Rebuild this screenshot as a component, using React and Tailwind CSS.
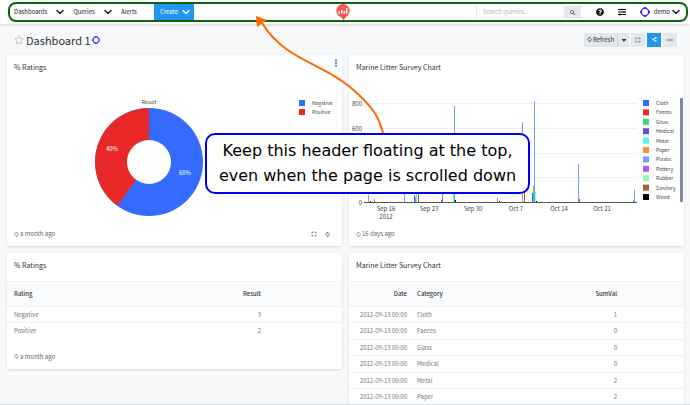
import React from 'react';
import { ChevronDown, Star } from 'lucide-react';
import {
  FaSearch,
  FaQuestionCircle,
  FaSlidersH,
  FaCaretDown,
  FaShareAlt,
  FaEllipsisV,
} from 'react-icons/fa';
import { MdFullscreen, MdMoreHoriz } from 'react-icons/md';

const BASELINE = 119;

const legendItems = [
  { name: 'Cloth', color: '#356aff' },
  { name: 'Faeces', color: '#e92828' },
  { name: 'Glass', color: '#3bd973' },
  { name: 'Medical', color: '#604fe9' },
  { name: 'Metal', color: '#50f5ed' },
  { name: 'Paper', color: '#fb8d3d' },
  { name: 'Plastic', color: '#799cff' },
  { name: 'Pottery', color: '#b554ff' },
  { name: 'Rubber', color: '#8cffb4' },
  { name: 'Sanitary', color: '#a55f2a' },
  { name: 'Wood', color: '#000000' },
];

const bars = [
  { x: 19, h: 7, color: '#799cff' },
  { x: 21, h: 1, color: '#000000' },
  { x: 25, h: 3, color: '#799cff' },
  { x: 55, h: 14, color: '#799cff' },
  { x: 65, h: 7, color: '#356aff' },
  { x: 66, h: 5, color: '#799cff' },
  { x: 67, h: 12, color: '#50f5ed' },
  { x: 69, h: 14, color: '#a55f2a' },
  { x: 92, h: 2, color: '#356aff' },
  { x: 93, h: 12, color: '#b554ff' },
  { x: 104, h: 12, color: '#50f5ed' },
  { x: 105, h: 96, color: '#799cff' },
  { x: 106, h: 2, color: '#000000' },
  { x: 148, h: 4, color: '#799cff' },
  { x: 150, h: 1, color: '#000000' },
  { x: 173, h: 80, color: '#799cff' },
  { x: 175, h: 12, color: '#a55f2a' },
  { x: 183, h: 9, color: '#356aff' },
  { x: 184, h: 16, color: '#3bd973' },
  { x: 185, h: 101, color: '#799cff' },
  { x: 186, h: 10, color: '#8cffb4' },
  { x: 187, h: 1, color: '#000000' },
  { x: 229, h: 38, color: '#799cff' },
  { x: 230, h: 3, color: '#a55f2a' },
  { x: 284, h: 2, color: '#3bd973' },
  { x: 285, h: 12, color: '#799cff' },
];

const gridLines = [20, 45, 70, 94, 119];

const yTicks = [
  { label: '0', y: 119 },
  { label: '600', y: 45 },
  { label: '800', y: 20 },
];

const xTicks = [
  { label: 'Sep 16', x: 37 },
  { label: 'Sep 23', x: 80 },
  { label: 'Sep 30', x: 124 },
  { label: 'Oct 7', x: 167 },
  { label: 'Oct 14', x: 210 },
  { label: 'Oct 21', x: 253 },
];

const ratings = [
  { rating: 'Negative', result: 3 },
  { rating: 'Positive', result: 2 },
];

const survey = [
  { category: 'Cloth', sum: 1 },
  { category: 'Faeces', sum: 0 },
  { category: 'Glass', sum: 0 },
  { category: 'Medical', sum: 0 },
  { category: 'Metal', sum: 2 },
  { category: 'Paper', sum: 2 },
];

// Small two-arrow refresh icon
const RefreshIcon = ({ className }) => (
  <svg viewBox="0 0 12 12" className={className} fill="none" stroke="currentColor" strokeWidth="1.6">
    <path d="M2.4 8.4A4.3 4.3 0 0 1 6.5 1.8M9.6 3.6A4.3 4.3 0 0 1 5.5 10.2" />
    <path d="M6 0l2.6 2L6 4zM6 12L3.4 10 6 8z" fill="currentColor" stroke="none" />
  </svg>
);

// Ring avatar with a flat bump on each side
const Avatar = ({ className }) => (
  <svg viewBox="0 0 20 20" className={className} fill="none">
    <path
      d="M7 2.8L13 2.8L17.2 7L17.2 13L13 17.2L7 17.2L2.8 13L2.8 7Z"
      stroke="#4a2cf0"
      strokeWidth="2.6"
    />
    <path d="M8 1.4h4M8 18.6h4M1.4 8v4M18.6 8v4" stroke="#2a00e0" strokeWidth="2" />
  </svg>
);

const Logo = () => (
  <svg viewBox="0 0 28 32" className="h-4 w-3.5" aria-label="Redash">
    <path d="M9 24L15 32L21 24Z" fill="#d9403a" />
    <circle cx="14" cy="13.5" r="13.5" fill="#f25c55" />
    <path d="M5 15h3v4H5zM10 12h3v7h-3zM15 14h3v5h-3zM20 8h3v11h-3z" fill="#fff" />
  </svg>
);

const Header = () => (
  <header className="relative grid h-6 shrink-0 grid-cols-[1fr_auto_1fr] items-center bg-white pr-1 text-[6px] leading-3 text-[#222] shadow-sm">
    <nav className="flex items-center gap-[7px] pl-3.5">
      <a href="#dashboards">Dashboards</a>
      <ChevronDown className="h-3 w-3" strokeWidth={3} />
      <a href="#queries">Queries</a>
      <ChevronDown className="h-3 w-3" strokeWidth={3} />
      <a href="#alerts">Alerts</a>
      <button className="ml-2.5 flex h-4 items-center gap-0.5 bg-[#2196f3] pr-0.5 pl-1.5 text-white">
        Create
        <ChevronDown className="h-3 w-3" strokeWidth={3} />
      </button>
    </nav>
    <Logo />
    <div className="flex items-center justify-end pr-1">
      <input
        type="text"
        aria-label="Search queries"
        placeholder="Search queries..."
        className="h-3 w-[88px] border-l border-[#e4e8eb] px-1.5 placeholder:text-[#b5b5b5]"
      />
      <button aria-label="Search" className="mr-[15px] flex h-3 w-[17px] items-center justify-center bg-[#e4e9ed]">
        <FaSearch className="h-[5px] w-[5px] text-[#555]" />
      </button>
      <FaQuestionCircle className="mr-3.5 h-2 w-2 text-black" />
      <FaSlidersH className="mr-3.5 h-2 w-2 text-black" />
      <Avatar className="mr-1 h-2.5 w-2.5" />
      <span>demo</span>
      <ChevronDown className="h-3 w-3" strokeWidth={3} />
    </div>
    <div className="pointer-events-none absolute top-0.5 right-0.5 bottom-0.5 left-2 rounded-lg border-2 border-[#0f650f]" />
  </header>
);

const Card = ({ title, menu, children, footer }) => (
  <section className="relative flex flex-col rounded-xs bg-white shadow-sm">
    <h2 className="h-7 px-[7px] pt-1.5 text-[7px] leading-3 text-[#333]">{title}</h2>
    {menu && (
      <button aria-label="Widget menu" className="absolute top-1 right-0.5 text-[#2196f3]">
        <FaEllipsisV className="h-2 w-2" />
      </button>
    )}
    {children}
    {footer}
  </section>
);

const CardFooter = ({ text, actions }) => (
  <div className="flex h-6 items-center px-[7px] text-[6px] leading-3 text-[#666]">
    <RefreshIcon className="mr-px h-[5px] w-[5px]" />
    <span>{text}</span>
    {actions && (
      <div className="ml-auto flex items-center gap-[7px] pr-[5px] text-[#333]">
        <MdFullscreen className="h-2 w-2" />
        <RefreshIcon className="h-[5px] w-[5px]" />
      </div>
    )}
  </div>
);

const PieChart = () => (
  <svg viewBox="0 0 335 139" className="h-[139px] w-full text-[5px]" fill="#444">
    <text x="142" y="21" textAnchor="middle">Result</text>
    <circle cx="142" cy="79" r="54" fill="#356aff" />
    <path d="M142 79L110.3 122.7A54 54 0 0 1 142 25Z" fill="#e92828" />
    <circle cx="142" cy="79" r="22" fill="#fff" />
    <text x="105" y="68" textAnchor="middle" fill="#fff" className="text-[6px]">40%</text>
    <text x="178" y="92" textAnchor="middle" fill="#fff" className="text-[6px]">60%</text>
    <rect x="292" y="17" width="6" height="6" fill="#356aff" />
    <rect x="292" y="26" width="6" height="6" fill="#e92828" />
    <text x="305" y="22">Negative</text>
    <text x="305" y="31">Positive</text>
  </svg>
);

const BarChart = () => (
  <svg viewBox="0 0 335 139" className="h-[139px] w-full text-[6px]" fill="#444">
    {gridLines.map((y) => (
      <rect key={y} x="15" y={y} width="273" height="1" fill="#f0f0f0" />
    ))}
    {yTicks.map((tick) => (
      <text key={tick.label} x="13" y={tick.y + 3} textAnchor="end">{tick.label}</text>
    ))}
    {bars.map((bar) => (
      <rect key={bar.x} x={bar.x} y={BASELINE - bar.h} width="1" height={bar.h} fill={bar.color} />
    ))}
    <rect x="15" y={BASELINE} width="273" height="1" fill="#555" />
    {xTicks.map((tick) => (
      <text key={tick.label} x={tick.x} y="128" textAnchor="middle">{tick.label}</text>
    ))}
    <text x="37" y="136" textAnchor="middle">2012</text>
    {legendItems.map((item, i) => (
      <g key={item.name} className="text-[5px]">
        <rect x="294" y={17 + i * 9.4} width="6" height="6" fill={item.color} />
        <text x="307" y={22 + i * 9.4}>{item.name}</text>
      </g>
    ))}
    <rect x="331" y="15" width="3" height="104" rx="1" fill="#7b88a3" />
  </svg>
);

const headRow = 'h-[25px] border-y border-[#eff1f3] bg-[#fafbfc] text-[#333]';
const bodyRow = 'odd:h-4 even:h-[17px] border-b border-[#eff1f3] last:border-b-0';

const RatingsTable = () => (
  <table className="mb-[5px] w-full table-fixed text-[6px] leading-3 text-[#777]">
    <thead>
      <tr className={headRow}>
        <th className="w-[70px] pl-[7px] text-left font-medium">Rating</th>
        <th className="pr-[81px] text-right font-medium">Result</th>
      </tr>
    </thead>
    <tbody>
      {ratings.map((row) => (
        <tr key={row.rating} className={bodyRow}>
          <td className="pl-[7px]">{row.rating}</td>
          <td className="pr-[81px] text-right">{row.result}</td>
        </tr>
      ))}
    </tbody>
  </table>
);

const SurveyTable = () => (
  <table className="w-full table-fixed text-[6px] leading-3 text-[#777]">
    <thead>
      <tr className={headRow}>
        <th className="w-[58px] text-right font-medium">Date</th>
        <th className="pl-2.5 text-left font-medium">Category</th>
        <th className="pr-[67px] text-right font-medium">SumVal</th>
      </tr>
    </thead>
    <tbody>
      {survey.map((row) => (
        <tr key={row.category} className={bodyRow}>
          <td className="text-right whitespace-nowrap">2012-09-13 00:00</td>
          <td className="pl-2.5">{row.category}</td>
          <td className="pr-[67px] text-right">{row.sum}</td>
        </tr>
      ))}
    </tbody>
  </table>
);

const Toolbar = () => (
  <div className="ml-auto flex items-center gap-0.5 pr-[7px] text-[6px] leading-3 text-[#333]">
    <div className="flex">
      <button className="flex h-3.5 w-[34px] items-center justify-center gap-px border-r border-[#cfd6db] bg-[#e1e7eb]">
        <RefreshIcon className="h-[5px] w-[5px]" />
        Refresh
      </button>
      <button aria-label="Refresh schedule" className="flex h-3.5 w-[11px] items-center justify-center bg-[#e1e7eb]">
        <FaCaretDown className="h-2 w-2" />
      </button>
    </div>
    <button aria-label="Fullscreen" className="flex h-3.5 w-3.5 items-center justify-center bg-[#e1e7eb]">
      <MdFullscreen className="h-2 w-2" />
    </button>
    <button aria-label="Share" className="flex h-3.5 w-3.5 items-center justify-center bg-[#2196f3] text-white">
      <FaShareAlt className="h-[5px] w-[5px]" />
    </button>
    <button aria-label="More" className="flex h-3.5 w-3.5 items-center justify-center bg-[#e1e7eb]">
      <MdMoreHoriz className="h-2 w-2" />
    </button>
  </div>
);

// Callout bubble with an arrow up to the header
const Annotation = () => (
  <div className="pointer-events-none absolute inset-0">
    <svg viewBox="0 0 690 405" className="absolute top-0 left-0 h-[405px] w-[690px]" fill="none">
      <path d="M262 23C285 60 320 62 350 87S380 124 384 136" stroke="#ff6600" strokeWidth="2" />
      <path d="M256 16L267 20L257 27Z" fill="#ff6600" />
    </svg>
    <p className="absolute top-[133px] left-[205px] w-[325px] rounded-[10px] border-2 border-[#0000ee] bg-white pt-[3px] pb-1 text-center font-['DejaVu_Sans',sans-serif] text-[16px] leading-[25px] text-black">
      Keep this header floating at the top,
      <br />
      even when the page is scrolled down
    </p>
  </div>
);

const App = () => {
  return (
    <div className="relative flex h-screen flex-col overflow-hidden border-b border-[#d9dcdf] bg-[#f6f8f9] font-['Noto_Sans_CJK_SC',sans-serif]">
      <Header />
      <div className="flex h-[31px] shrink-0 items-center pr-1.5 pl-3.5">
        <Star className="mr-0.5 h-2.5 w-2.5 text-[#bbb]" strokeWidth={2} />
        <h1 className="text-[11px] leading-4 text-[#333]">Dashboard 1</h1>
        <Avatar className="ml-px h-2 w-2" />
        <Toolbar />
      </div>
      <main className="grid grid-cols-2 items-start gap-[7px] pr-1.5 pl-[7px]">
        <Card title="% Ratings" menu footer={<CardFooter text="a month ago" actions />}>
          <PieChart />
        </Card>
        <Card title="Marine Litter Survey Chart" footer={<CardFooter text="16 days ago" />}>
          <BarChart />
        </Card>
        <Card title="% Ratings" footer={<CardFooter text="a month ago" />}>
          <RatingsTable />
        </Card>
        <Card title="Marine Litter Survey Chart">
          <SurveyTable />
        </Card>
      </main>
      <Annotation />
    </div>
  );
};

export default App;
